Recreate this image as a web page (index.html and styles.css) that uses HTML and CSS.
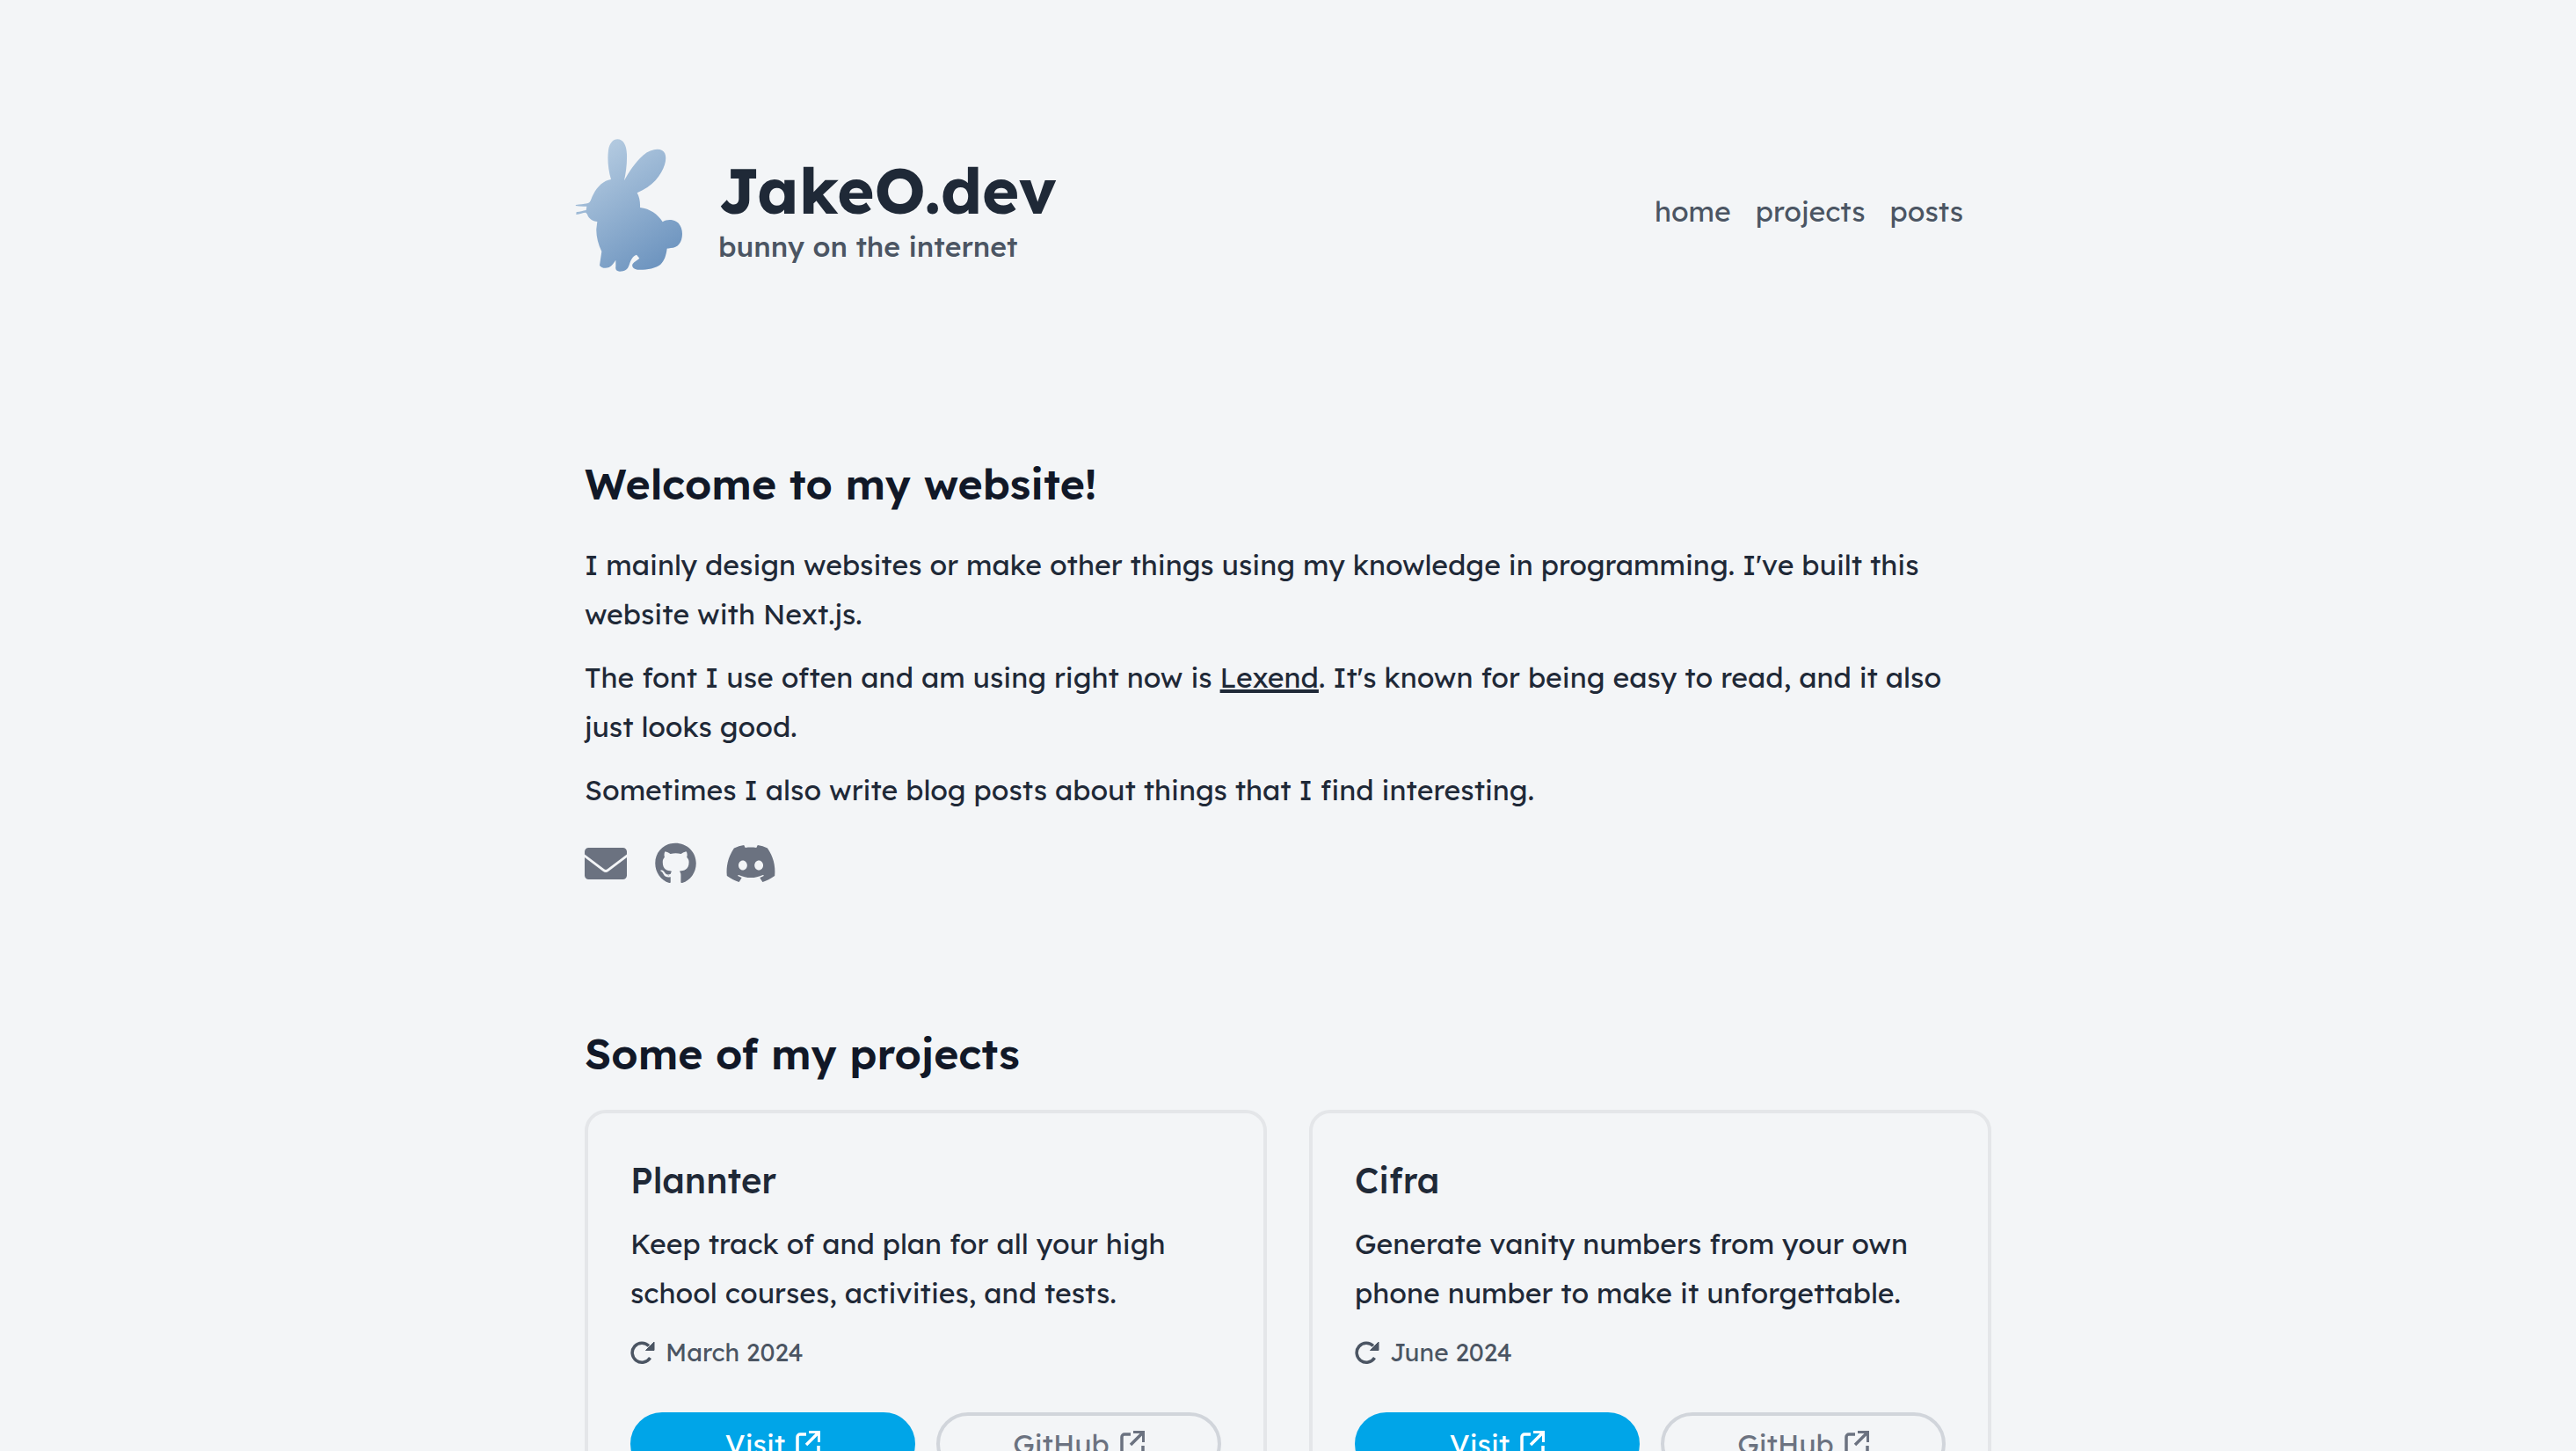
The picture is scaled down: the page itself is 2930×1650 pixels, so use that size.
FILE: index.html
```html
<!DOCTYPE html>
<html lang="en">
<head>
<meta charset="utf-8">
<meta name="viewport" content="width=device-width, initial-scale=1">
<title>JakeO.dev</title>
<link rel="stylesheet" href="styles.css">
</head>
<body>
<svg class="sprite" aria-hidden="true">
  <symbol id="external" viewBox="0 0 28 30">
    <path d="M12 4H5a3 3 0 0 0-3 3v18a3 3 0 0 0 3 3h18a3 3 0 0 0 3-3V17M12 16L25 3" fill="none" stroke="currentColor" stroke-width="3.500"/>
    <path d="M15 0H28V13H25V5L23 3H15Z" fill="currentColor"/>
  </symbol>
  <symbol id="refresh" viewBox="-1 0 28 26">
    <path d="M21.500 19A11 11 0 1 1 20 5.500" fill="none" stroke="currentColor" stroke-width="3.500"/>
    <path d="M26 1V10.500H16.500Z" fill="currentColor" stroke="currentColor" stroke-linejoin="round"/>
  </symbol>
</svg>
<header class="site-header">
  <div class="brand">
    <svg class="rabbit" viewBox="11 24 384 492" role="img" aria-label="Rabbit">
      <defs>
        <linearGradient id="fur" gradientUnits="userSpaceOnUse" x1="90" y1="70" x2="340" y2="440">
          <stop offset="0" stop-color="#b3cae0"/>
          <stop offset="1" stop-color="#6d94bf"/>
        </linearGradient>
      </defs>
      <path fill="url(#fur)" d="M149 162C139 128 136 92 140 62C144 38 156 25 171 25C190 25 202 44 203 76C204 110 200 138 194 166C211 134 232 103 258 80C281 61 307 55 323 63C338 71 338 92 332 112C321 148 290 187 238 208C246 222 249 240 248 258C282 262 308 280 325 307C334 301 346 299 358 301C379 304 392 323 392 348C392 376 377 396 353 396C348 397 343 398 340 398C337 422 331 439 318 452C300 467 262 472 239 470C225 468 218 459 223 450C228 441 240 438 246 431L236 419C222 424 216 438 211 454C206 470 195 476 179 476C168 475 163 470 165 459V437C158 447 153 457 142 462C130 467 114 464 110 455L117 408C104 381 98 353 99 331L102 306C86 304 72 295 68 281L63 275C53 275 43 281 30 282L31 273C42 274 51 268 64 267L66 254C52 255 40 254 28 252L29 249C43 247 56 247 68 244C81 241 81 225 89 212C104 184 124 166 149 162Z"/>
    </svg>
    <div class="brand-text">
      <h1>JakeO.dev</h1>
      <p class="tagline">bunny on the internet</p>
    </div>
  </div>
  <nav class="nav" aria-label="Main">
    <a href="#home">home</a>
    <a href="#projects">projects</a>
    <a href="#posts">posts</a>
  </nav>
</header>
<main class="content">
  <section class="intro" id="home">
    <h2>Welcome to my website!</h2>
    <div class="prose">
      <p>I mainly design websites or make other things using my knowledge in programming. I've built this website with Next.js.</p>
      <p>The font I use often and am using right now is <a href="#lexend">Lexend</a>. It's known for being easy to read, and it also just looks good.</p>
      <p>Sometimes I also write blog posts about things that I find interesting.</p>
    </div>
    <div class="social">
      <a href="#email" aria-label="Email"><svg width="48" height="48" viewBox="0 0 512 512" fill="currentColor"><path d="M48 64H464a48 48 0 0 1 48 48v33L275 323q-19 14-38 0L0 145V112A48 48 0 0 1 48 64ZM0 182L222 349q34 25 68 0L512 182V400a48 48 0 0 1-48 48H48a48 48 0 0 1-48-48Z"/></svg></a>
      <a href="#github" aria-label="GitHub"><svg width="47" height="48" viewBox="0 0 496 512" fill="currentColor"><path d="M165.900 397.400c0 2-2.300 3.600-5.200 3.600-3.300.3-5.600-1.300-5.600-3.600 0-2 2.300-3.600 5.200-3.600 3-.3 5.600 1.300 5.600 3.600zM244.800 8C106.100 8 0 113.300 0 252c0 110.900 69.800 205.800 169.500 239.200 12.800 2.300 17.300-5.600 17.300-12.100 0-6.200-.3-40.400-.3-61.400 0 0-70 15-84.700-29.800 0 0-11.400-29.100-27.800-36.600 0 0-22.900-15.700 1.600-15.400 0 0 24.900 2 38.600 25.800 21.900 38.600 58.600 27.500 72.900 20.900 2.300-16 8.800-27.100 16-33.700-55.900-6.200-112.300-14.300-112.300-110.500 0-27.500 7.600-41.300 23.600-58.900-2.600-6.500-11.100-33.300 2.600-67.900 20.900-6.500 69 27 69 27 20-5.600 41.500-8.500 62.800-8.500s42.800 2.900 62.800 8.500c0 0 48.100-33.600 69-27 13.700 34.700 5.200 61.400 2.600 67.900 16 17.700 25.800 31.500 25.800 58.900 0 96.500-58.900 104.200-114.800 110.500 9.200 7.900 17 22.900 17 46.400 0 33.700-.3 75.400-.3 83.600 0 6.500 4.600 14.400 17.300 12.100C428.200 457.800 496 362.900 496 252 496 113.300 383.500 8 244.800 8z"/></svg></a>
      <a href="#discord" aria-label="Discord"><svg width="60" height="48" viewBox="-1 1.500 26 21" fill="currentColor"><path d="M20.317 4.370a19.791 19.791 0 0 0-4.885-1.515.074.074 0 0 0-.079.037c-.211.375-.445.865-.608 1.250-1.845-.276-3.680-.276-5.487 0-.164-.393-.406-.874-.618-1.250a.077.077 0 0 0-.078-.037 19.736 19.736 0 0 0-4.885 1.515.070.070 0 0 0-.032.028C.533 9.046-.320 13.580.099 18.058a.082.082 0 0 0 .031.056c2.053 1.508 4.041 2.423 5.993 3.029a.078.078 0 0 0 .084-.028c.462-.630.873-1.295 1.226-1.994a.076.076 0 0 0-.042-.106c-.653-.248-1.274-.550-1.872-.892a.077.077 0 0 1-.008-.128c.126-.094.252-.192.372-.291a.074.074 0 0 1 .078-.011c3.928 1.793 8.180 1.793 12.061 0a.074.074 0 0 1 .079.010c.120.098.246.198.373.292a.077.077 0 0 1-.007.128 12.299 12.299 0 0 1-1.873.891.077.077 0 0 0-.041.107c.360.698.772 1.363 1.225 1.993a.076.076 0 0 0 .084.029c1.961-.607 3.950-1.522 6.002-3.029a.077.077 0 0 0 .032-.055c.500-5.177-.838-9.674-3.549-13.660a.061.061 0 0 0-.031-.029zM8.020 15.331c-1.182 0-2.157-1.086-2.157-2.419s.956-2.419 2.157-2.419c1.211 0 2.176 1.095 2.157 2.419 0 1.333-.956 2.419-2.157 2.419zm7.975 0c-1.183 0-2.157-1.086-2.157-2.419s.955-2.419 2.157-2.419c1.211 0 2.176 1.095 2.157 2.419 0 1.333-.946 2.419-2.157 2.419z"/></svg></a>
    </div>
  </section>
  <section id="projects">
    <h2>Some of my projects</h2>
    <div class="cards">
      <article class="card">
        <h3>Plannter</h3>
        <p>Keep track of and plan for all your high school courses, activities, and tests.</p>
        <p class="date"><svg width="28" height="26" aria-hidden="true"><use href="#refresh"/></svg>March 2024</p>
        <div class="actions">
          <a class="button primary" href="#plannter">Visit<svg width="28" height="30" aria-hidden="true"><use href="#external"/></svg></a>
          <a class="button" href="#plannter-code">GitHub<svg width="28" height="30" aria-hidden="true"><use href="#external"/></svg></a>
        </div>
      </article>
      <article class="card">
        <h3>Cifra</h3>
        <p>Generate vanity numbers from your own phone number to make it unforgettable.</p>
        <p class="date"><svg width="28" height="26" aria-hidden="true"><use href="#refresh"/></svg>June 2024</p>
        <div class="actions">
          <a class="button primary" href="#cifra">Visit<svg width="28" height="30" aria-hidden="true"><use href="#external"/></svg></a>
          <a class="button" href="#cifra-code">GitHub<svg width="28" height="30" aria-hidden="true"><use href="#external"/></svg></a>
        </div>
      </article>
    </div>
  </section>
</main>
</body>
</html>
```
FILE: styles.css
```css
* {
  box-sizing: border-box;
}

body {
  margin: 0;
  background: #f3f5f7;
  color: #1f2937;
  font-family: Lexend, Inter, sans-serif;
  font-size: 32px;
  line-height: 56px;
}

h1, h2, h3, p {
  margin: 0;
}

a {
  color: inherit;
}

svg {
  display: block;
  flex: none;
}

.sprite {
  position: absolute;
  width: 0;
  height: 0;
}

.site-header {
  display: flex;
  align-items: center;
  justify-content: space-between;
  max-width: 1632px;
  margin: 0 auto;
  padding: 158px 48px 0 0;
}

.brand {
  display: flex;
  align-items: center;
  gap: 40px;
}

.rabbit {
  width: 128px;
  height: 164px;
}

.brand-text {
  display: grid;
  gap: 4px;
  padding-top: 4px;
}

h1 {
  font-size: 72px;
  font-weight: 700;
  line-height: 72px;
}

.tagline {
  color: #4b5563;
  font-weight: 500;
  line-height: 48px;
}

.nav {
  display: flex;
  gap: 28px;
  color: #4b5563;
  line-height: 48px;
}

.nav a {
  text-decoration: none;
}

.content {
  display: grid;
  gap: 164px;
  max-width: 1600px;
  margin: 200px auto 160px;
}

h2 {
  margin-bottom: 36px;
  color: #111827;
  font-size: 48px;
  font-weight: 600;
}

.prose {
  display: grid;
  gap: 16px;
}

.prose a {
  text-decoration-thickness: 4px;
  text-underline-offset: 2px;
  text-decoration-skip-ink: none;
}

.social {
  display: flex;
  gap: 32px;
  margin-top: 32px;
  color: #6b7280;
}

.cards {
  display: grid;
  grid-template-columns: 1fr 1fr;
  gap: 48px;
}

.card {
  padding: 48px;
  border: 4px solid #e4e6e9;
  border-radius: 24px;
}

h3 {
  margin-bottom: 16px;
  font-size: 40px;
  font-weight: 500;
}

.date {
  display: flex;
  align-items: center;
  gap: 12px;
  margin-top: 16px;
  color: #4b5563;
  font-size: 28px;
  line-height: 48px;
}

.actions {
  display: grid;
  grid-template-columns: 1fr 1fr;
  gap: 24px;
  margin-top: 44px;
}

.button {
  display: flex;
  align-items: center;
  justify-content: center;
  gap: 12px;
  padding: 8px;
  border: 4px solid #d1d5db;
  border-radius: 40px;
  color: #6b7280;
  line-height: 48px;
  text-decoration: none;
}

.button.primary {
  border-color: #00a5e8;
  background: #00a5e8;
  color: #fff;
}
```
